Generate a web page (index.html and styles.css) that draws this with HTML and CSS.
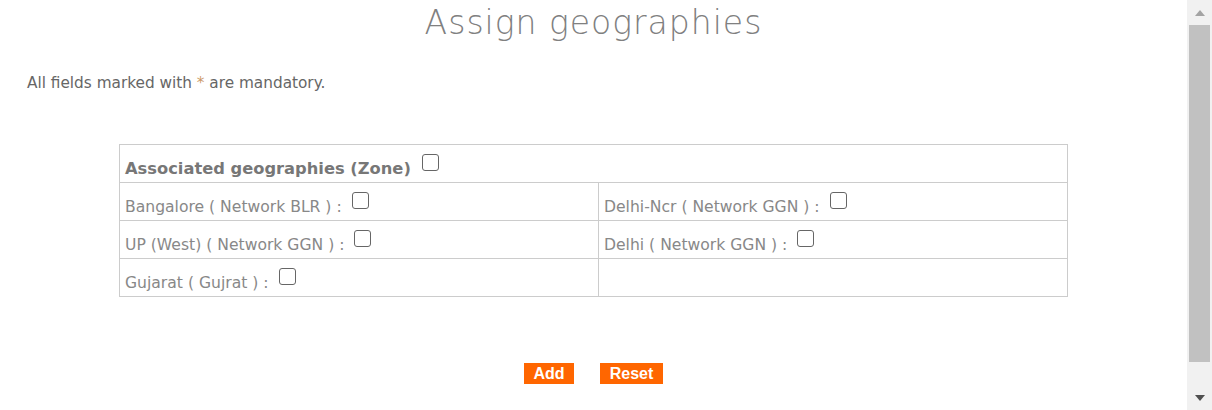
FILE: index.html
```html
<!DOCTYPE html>
<html>
<head>
<meta charset="utf-8">
<link rel="stylesheet" href="styles.css">
</head>
<body>
<div class="layout">
  <main class="page">
    <h1 class="title">Assign geographies</h1>
    <p class="note">All fields marked with <span class="star">*</span> are mandatory.</p>
    <table class="geo">
      <tr>
        <th colspan="2">Associated geographies (Zone) <input type="checkbox" class="cb"></th>
      </tr>
      <tr>
        <td class="left">Bangalore ( Network BLR ) : <input type="checkbox" class="cb"></td>
        <td>Delhi-Ncr ( Network GGN ) : <input type="checkbox" class="cb"></td>
      </tr>
      <tr>
        <td class="left">UP (West) ( Network GGN ) : <input type="checkbox" class="cb"></td>
        <td>Delhi ( Network GGN ) : <input type="checkbox" class="cb"></td>
      </tr>
      <tr>
        <td class="left">Gujarat ( Gujrat ) : <input type="checkbox" class="cb"></td>
        <td></td>
      </tr>
    </table>
    <div class="actions">
      <button class="btn add">Add</button>
      <button class="btn reset">Reset</button>
    </div>
  </main>
  <div class="scrollbar">
    <div class="arrow up"></div>
    <div class="track"><div class="thumb"></div></div>
    <div class="arrow down"></div>
  </div>
</div>
</body>
</html>
```

FILE: styles.css
```css
html, body {
  margin: 0;
  padding: 0;
  background: #fff;
  overflow: hidden;
}
body {
  font-family: "DejaVu Sans", Verdana, sans-serif;
  color: #777;
}
.layout {
  display: flex;
  height: 410px;
}
.page {
  flex: 1;
  min-width: 0;
}
.title {
  margin: 0;
  padding-top: 3px;
  text-align: center;
  font-family: "DejaVu Sans", sans-serif;
  font-weight: 200;
  font-size: 33px;
  letter-spacing: 1px;
  line-height: 40px;
  color: #808080;
}
.note {
  margin: 31px 0 0 27px;
  font-size: 15.3px;
  line-height: 18px;
  color: #666;
}
.star {
  color: #c96;
}
.geo {
  width: 949px;
  margin: 52px auto 0;
  border-collapse: collapse;
  font-size: 15.6px;
}
.geo th, .geo td {
  border: 1px solid #ccc;
  height: 38px;
  padding: 4px 0 0 5px;
  box-sizing: border-box;
  text-align: left;
  vertical-align: middle;
  color: #888;
}
.geo th {
  font-weight: bold;
  font-size: 16.3px;
  color: #777;
}
.geo td.left {
  width: 479px;
}
.cb {
  appearance: none;
  -webkit-appearance: none;
  width: 17px;
  height: 17px;
  margin: 0 0 0 5px;
  border: 1.5px solid #666;
  border-radius: 3px;
  background: #fff;
  vertical-align: 3px;
  box-sizing: border-box;
}
.actions {
  display: flex;
  justify-content: center;
  gap: 26px;
  margin-top: 66px;
}
.btn {
  border: 0;
  background: #ff6600;
  color: #fff;
  font-family: "Liberation Sans", Arial, sans-serif;
  font-weight: bold;
  font-size: 16px;
  height: 21px;
  line-height: 21px;
  padding: 0;
  cursor: pointer;
}
.add { width: 50px; }
.reset { width: 63px; }
.scrollbar {
  width: 25px;
  flex: none;
  background: #f1f1f1;
  display: flex;
  flex-direction: column;
}
.arrow {
  height: 25px;
  flex: none;
  display: flex;
  align-items: center;
  justify-content: center;
}
.arrow::before {
  content: "";
  width: 0;
  height: 0;
  border-left: 5.5px solid transparent;
  border-right: 5.5px solid transparent;
}
.arrow.up::before {
  border-bottom: 6px solid #a3a3a3;
}
.arrow.down::before {
  border-top: 6px solid #505050;
}
.track {
  flex: 1;
  padding: 0 2px;
}
.thumb {
  height: 337px;
  background: #c1c1c1;
}
```
